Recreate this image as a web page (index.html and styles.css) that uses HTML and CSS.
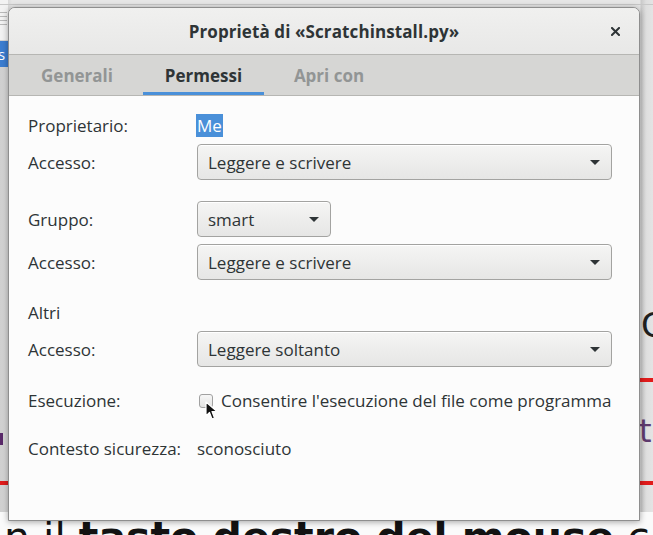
FILE: index.html
```html
<!DOCTYPE html>
<html lang="it">
<head>
<meta charset="utf-8">
<title>Proprietà di «Scratchinstall.py»</title>
<link rel="stylesheet" href="styles.css">
</head>
<body>
<div class="desktop">
  <div class="bg-doc">
    <span class="doc-line"></span><span class="doc-line"></span><span class="doc-line"></span><span class="doc-line"></span>
  </div>
  <div class="bg-sel">s</div>
  <div class="bg-topline"></div>
  <div class="bg-right">
    <span class="bg-big-c">C</span>
    <span class="bg-ta">ta</span>
  </div>
  <div class="bg-red bg-red-1"></div>
  <div class="bg-red bg-red-2"></div>
  <div class="bg-purple"></div>
  <div class="bg-bottom"><span class="reg">n il </span><b>tasto destro del mouse</b><span class="reg"> c</span></div>

  <div class="dialog">
    <header class="titlebar">
      <span></span>
      <h1 class="title">Proprietà di «Scratchinstall.py»</h1>
      <button class="close" aria-label="Chiudi">
        <svg width="9" height="9" viewBox="0 0 9 9"><path d="M1 1 L8 8 M8 1 L1 8" stroke="#2e3436" stroke-width="2" stroke-linecap="square"/></svg>
      </button>
    </header>
    <nav class="tabs">
      <span class="tab tab-1">Generali</span>
      <span class="tab tab-2 active">Permessi</span>
      <span class="tab tab-3">Apri con</span>
    </nav>
    <main class="content">
      <div class="row r1">
        <span class="label">Proprietario:</span>
        <span class="value"><span class="selected">Me</span></span>
      </div>
      <div class="row r2">
        <span class="label">Accesso:</span>
        <div class="combo wide"><span>Leggere e scrivere</span><i class="arrow"></i></div>
      </div>
      <div class="row r3">
        <span class="label">Gruppo:</span>
        <div class="combo narrow"><span>smart</span><i class="arrow"></i></div>
      </div>
      <div class="row r4">
        <span class="label">Accesso:</span>
        <div class="combo wide"><span>Leggere e scrivere</span><i class="arrow"></i></div>
      </div>
      <div class="row r5">
        <span class="label">Altri</span>
      </div>
      <div class="row r6">
        <span class="label">Accesso:</span>
        <div class="combo wide"><span>Leggere soltanto</span><i class="arrow"></i></div>
      </div>
      <div class="row r7">
        <span class="label">Esecuzione:</span>
        <label class="check"><span class="box"></span><span>Consentire l'esecuzione del file come programma</span></label>
      </div>
      <div class="row r8">
        <span class="label">Contesto sicurezza:</span>
        <span class="value">sconosciuto</span>
      </div>
    </main>
  </div>

  <svg class="cursor" width="13" height="20" viewBox="0 0 13 20">
    <path d="M1 1 L1 15 L4.5 11.5 L7 18 L9.5 17 L7 10.5 L12 10.5 Z" fill="#111" stroke="#fff" stroke-width="1.2" stroke-linejoin="round"/>
  </svg>
</div>
</body>
</html>
```

FILE: styles.css
```css
* { box-sizing: border-box; }
html, body { margin: 0; padding: 0; }
body {
  width: 653px;
  height: 535px;
  overflow: hidden;
  background: #dedede;
  font-family: "Open Sans", "Noto Sans", sans-serif;
}
.desktop {
  position: relative;
  width: 653px;
  height: 535px;
  background: linear-gradient(to right, #cfcfcf 0, #d9d9d9 8px, #e6e6e6 12px, #e6e6e6 640px, #c9c9c9 641px, #dedede 646px, #e4e4e4 653px);
}
.bg-doc {
  position: absolute;
  left: 0; top: 0;
  width: 8px; height: 40px;
  background: #f2f2f2;
  display: flex;
  flex-direction: column;
  gap: 3px;
  padding: 12px 1px 0 0;
}
.doc-line { display: block; height: 1px; background: #b9b9b9; }
.bg-sel {
  position: absolute;
  left: 0; top: 41px;
  width: 8px; height: 26px;
  background: #3b7dd0;
  color: #fff;
  font: 15px "Open Sans", sans-serif;
  line-height: 26px;
  text-indent: -2px;
  overflow: hidden;
}
.bg-topline {
  position: absolute;
  left: 0; top: 4px;
  width: 653px; height: 1px;
  background: #c8c8c8;
}
.bg-right {
  position: absolute;
  left: 640px; top: 0;
  width: 13px; height: 535px;
  overflow: hidden;
}
.bg-big-c {
  position: absolute;
  left: 1px; top: 305px;
  font: 34px "DejaVu Sans", sans-serif;
  color: #1f1f1f;
}
.bg-ta {
  position: absolute;
  left: -1px; top: 412px;
  font: 32px "DejaVu Sans", sans-serif;
  color: #5e3a6e;
}
.bg-red {
  position: absolute;
  height: 4px;
  background: #e01b1b;
}
.bg-red-1 { left: 640px; top: 378px; width: 13px; }
.bg-red-2 { left: 0; top: 481px; width: 653px; }
.bg-purple {
  position: absolute;
  left: 0; top: 433px;
  width: 3px; height: 12px;
  background: #5a2a6a;
}
.bg-bottom {
  position: absolute;
  left: 0; top: 512px;
  width: 653px; height: 23px;
  background: #fafafa;
  padding-left: 4px;
  white-space: nowrap;
  overflow: hidden;
  font-family: "DejaVu Sans", sans-serif;
  font-size: 41px;
  line-height: 50px;
  color: #121212;
}
.bg-bottom b { font-weight: bold; }
.bg-bottom .reg { font-weight: normal; }

.dialog {
  position: absolute;
  left: 8px; top: 7px;
  width: 632px; height: 514px;
  display: flex;
  flex-direction: column;
  background: #fcfcfc;
  border: 1px solid #8e8e8e;
  border-radius: 7px 7px 0 0;
  box-shadow: 0 1px 6px rgba(0,0,0,0.35);
  overflow: hidden;
  color: #2e3436;
}
.titlebar {
  height: 47px;
  flex: none;
  display: grid;
  grid-template-columns: 1fr auto 1fr;
  align-items: center;
  background: linear-gradient(#f0f0ef, #e8e8e7);
  border-bottom: 1px solid #b6b6b3;
}
.title {
  margin: 0;
  font-size: 17px;
  font-weight: 700;
  color: #2e3436;
  letter-spacing: 0.1px;
}
.close {
  justify-self: end;
  margin-right: 14px;
  width: 20px; height: 20px;
  padding: 0;
  border: 0;
  background: none;
  display: flex;
  align-items: center;
  justify-content: center;
}
.tabs {
  height: 41px;
  flex: none;
  display: flex;
  gap: 8px;
  padding-left: 10px;
  background: #d6d6d4;
  border-bottom: 1px solid #b6b6b3;
}
.tab {
  display: flex;
  align-items: center;
  justify-content: center;
  font-size: 17px;
  font-weight: 700;
  color: #929595;
  height: 40px;
  padding-top: 1px;
}
.tab-1 { width: 116px; }
.tab-2 { width: 121px; }
.tab-3 { width: 114px; }
.tab.active {
  color: #2e3436;
  box-shadow: inset 0 -3px 0 #4a90d9;
}
.content {
  flex: 1;
  padding: 18px 0 0 19px;
  display: flex;
  flex-direction: column;
  font-size: 17px;
  line-height: 23px;
}
.row {
  display: flex;
  align-items: center;
  min-height: 23px;
}
.label { width: 169px; flex: none; }
.r2, .r4, .r6 { margin-top: 7px; }
.r3 { margin-top: 21px; }
.r5 { margin-top: 21px; }
.r7 { margin-top: 22px; }
.r8 { margin-top: 25px; }
.selected {
  display: inline-block;
  background: #4a90d9;
  color: #fff;
  height: 23px;
  line-height: 23px;
  padding: 0 1px;
  margin-left: -1px;
}
.combo {
  height: 36px;
  display: flex;
  align-items: center;
  justify-content: space-between;
  padding: 0 11px 0 10px;
  border: 1px solid #a3a3a1;
  border-radius: 4px;
  background: linear-gradient(#f5f5f4, #e6e6e5);
  box-shadow: inset 0 1px #ffffff;
}
.combo.wide { width: 415px; }
.combo.narrow { width: 134px; }
.arrow {
  width: 0; height: 0;
  border-left: 5px solid transparent;
  border-right: 5px solid transparent;
  border-top: 5px solid #2e3436;
}
.check {
  display: flex;
  align-items: center;
  gap: 8px;
  margin-left: 2px;
}
.box {
  width: 14px; height: 14px;
  border: 1px solid #a1a1a1;
  border-radius: 3px;
  background: linear-gradient(#f7f7f7, #e3e3e2);
}
.cursor {
  position: absolute;
  left: 205px; top: 401px;
}
```
